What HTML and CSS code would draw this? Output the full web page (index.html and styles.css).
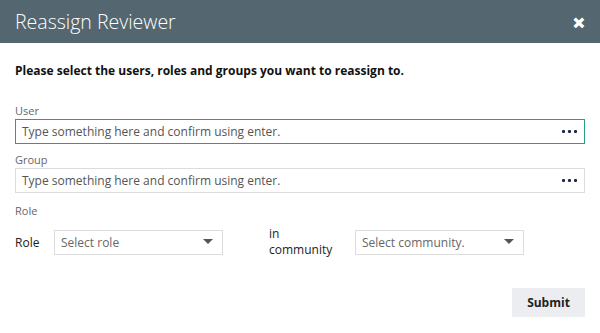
FILE: index.html
```html
<!DOCTYPE html>
<html lang="en">

<head>
    <meta charset="UTF-8">
    <title>Reassign Reviewer</title>
    <link rel="stylesheet" href="styles.css">
</head>

<body>
    <div class="dialog">
        <div class="header">
            <div class="title">Reassign Reviewer</div>
            <div class="close">&#x2715;</div>
        </div>

        <div class="content">
            <div class="intro">Please select the users, roles and groups you want to reassign to.</div>

            <div class="field user">
                <div class="label">User</div>
                <div class="input focused">
                    <span class="placeholder">Type something here and confirm using enter.</span>
                    <span class="dots"><i></i><i></i><i></i></span>
                </div>
            </div>

            <div class="field group">
                <div class="label">Group</div>
                <div class="input">
                    <span class="placeholder">Type something here and confirm using enter.</span>
                    <span class="dots"><i></i><i></i><i></i></span>
                </div>
            </div>

            <div class="field role">
                <div class="label">Role</div>
                <div class="role-row">
                    <div class="row-label">Role</div>
                    <div class="select">
                        <span class="placeholder">Select role</span>
                        <span class="caret"></span>
                    </div>
                    <div class="row-label community">in<br>community</div>
                    <div class="select">
                        <span class="placeholder">Select community.</span>
                        <span class="caret"></span>
                    </div>
                </div>
            </div>

            <div class="footer">
                <button class="submit">Submit</button>
            </div>
        </div>
    </div>
</body>

</html>
```

FILE: styles.css
```css
body {
    margin: 0;
    font-family: "Open Sans", "Liberation Sans", sans-serif;
    background: #fff;
}

.dialog {
    width: 600px;
    height: 333px;
    background: #fff;
}

.header {
    height: 43px;
    background: #546670;
    display: flex;
    align-items: center;
    justify-content: space-between;
    padding: 0 15px;
}

.title {
    color: #fff;
    font-size: 19.5px;
    font-weight: 300;
    margin-top: -1px;
}

.close {
    color: #fff;
    font-size: 14px;
    font-weight: bold;
    margin-top: 2px;
    -webkit-text-stroke: 1.2px #fff;
}

.content {
    padding: 0 15px;
}

.intro {
    font-size: 12px;
    font-weight: bold;
    color: #111;
    margin-top: 19px;
    line-height: 18px;
}

.field.user {
    margin-top: 23px;
}

.field.group {
    margin-top: 8px;
}

.field.role {
    margin-top: 10px;
}

.label {
    font-size: 11px;
    color: #666;
    line-height: 15px;
}

.input {
    height: 23px;
    border: 1px solid #dcdcdc;
    margin-top: 1px;
    display: flex;
    align-items: center;
    justify-content: space-between;
    padding: 0 6px;
}

.input.focused {
    border-color: #26a085;
}

.placeholder {
    font-size: 12px;
    color: #666;
}

.input .placeholder {
    color: #555;
}

.dots {
    display: flex;
    gap: 3px;
    margin-right: 1px;
}

.dots i {
    width: 3px;
    height: 3px;
    background: #1c2a44;
    border-radius: 1px;
}

.role-row {
    display: flex;
    align-items: center;
    margin-top: 8px;
}

.row-label {
    font-size: 12px;
    color: #222;
    width: 39px;
}

.community {
    width: 86px;
    margin-left: 46px;
    line-height: 16px;
}

.select {
    width: 169px;
    height: 25px;
    border: 1px solid #dcdcdc;
    display: flex;
    align-items: center;
    justify-content: space-between;
    padding: 0 6px;
    box-sizing: border-box;
}

.caret {
    width: 0;
    height: 0;
    border-left: 5px solid transparent;
    border-right: 5px solid transparent;
    border-top: 5px solid #555;
    margin-right: 3px;
    margin-top: -2px;
}

.footer {
    display: flex;
    justify-content: flex-end;
    margin-top: 30px;
}

.submit {
    border: none;
    background: #ebedf0;
    font-family: "Open Sans", "Liberation Sans", sans-serif;
    font-size: 12px;
    font-weight: bold;
    color: #222;
    width: 73px;
    height: 29px;
}
```
